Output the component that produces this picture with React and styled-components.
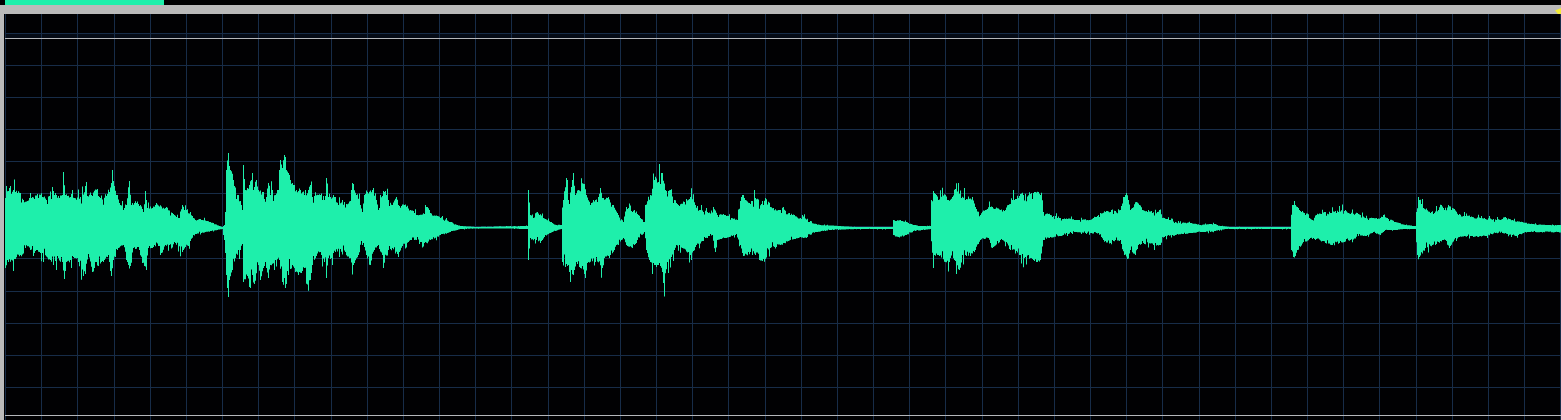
import React, { useMemo } from 'react'
import styled, { createGlobalStyle } from 'styled-components'

const GlobalStyle = createGlobalStyle`
	html, body {
		margin: 0;
		padding: 0;
		background: #000;
	}
`

const Window = styled.div`
	width: 1561px;
	height: 420px;
	display: flex;
	flex-direction: column;
	overflow: hidden;
	background: #bababa;
`

const ProgressTrack = styled.div`
	height: 5px;
	padding-left: 5px;
	background: #010102;
`

const ProgressFill = styled.div`
	width: ${({ $width }) => $width}px;
	height: 100%;
	background: #1eefab;
`

const Band = styled.div`
	position: relative;
	height: 9px;
	background: #bababa;
	&::after {
		content: '';
		position: absolute;
		right: 0;
		bottom: 0;
		width: 6px;
		height: 6px;
		background: #f4ec3a;
		clip-path: polygon(100% 0, 100% 100%, 50% 100%, 0 40%);
	}
`

const Body = styled.div`
	flex: 1;
	display: flex;
	min-height: 0;
`

const Rail = styled.div`
	width: 4px;
	background: #bababa;
`

const Scope = styled.div`
	flex: 1;
	background: #010103;
	svg {
		display: block;
	}
`

const GRID = '#172c48'
const GREY = '#b4b6ba'
const GREEN = '#1eefab'

const VERTICAL = Array.from({ length: 44 }, (_, i) => Math.round(5 + i * 36.17))
const HORIZONTAL = [33, 65, 97, 129, 161, 193, 226, 258, 291, 323, 355, 387]

// outline of the recording, [x, y] pairs
const TOP = [
	[5, 198], [6, 186], [9, 188], [13, 190], [15, 192], [20, 193], [23, 200], [27, 201], [29, 198], [30, 193], [31, 198], [34, 199], [37, 194], [38, 198], [42, 197], [46, 200], [49, 196], [52, 187], [54, 195], [58, 196], [62, 195], [63, 172], [65, 195], [70, 197], [72, 190], [74, 198], [80, 197], [85, 186], [87, 196], [92, 196], [97, 189], [99, 197], [106, 196], [109, 192], [113, 181], [116, 195], [119, 203], [123, 210], [126, 205], [129, 181], [131, 205], [136, 203], [140, 205], [143, 212], [145, 191], [147, 208], [155, 205], [165, 208], [172, 213], [178, 218], [182, 205], [186, 210], [190, 212], [195, 220], [200, 219], [210, 222], [222, 227],
	[224, 225], [225, 212], [226, 170], [228, 153], [230, 170], [233, 180], [238, 195], [242, 210], [243, 165], [245, 190], [249, 185], [252, 173], [253, 190], [256, 180], [258, 190], [262, 192], [266, 197], [268, 183], [270, 195], [272, 190], [275, 195], [278, 190], [279, 170], [280, 160], [282, 168], [284, 155], [286, 170], [290, 180], [294, 185], [296, 190], [300, 190], [304, 195], [310, 185], [312, 197], [318, 195], [325, 196], [326, 178], [328, 197], [335, 197], [338, 205], [342, 200], [346, 204], [350, 201], [352, 183], [356, 195], [360, 205], [362, 212], [364, 195], [367, 192], [373, 188], [376, 200], [378, 210], [380, 195], [383, 191], [388, 200], [392, 205], [396, 197], [398, 205], [404, 205], [410, 210], [416, 215], [424, 214], [426, 207], [430, 213], [440, 218], [450, 222], [460, 226], [475, 227],
	[527, 226], [528, 190], [530, 215], [533, 218], [537, 212], [543, 218], [550, 222], [556, 225], [561, 225], [563, 200], [566, 178], [568, 200], [571, 187], [573, 173], [575, 195], [578, 190], [584, 184], [586, 195], [590, 205], [598, 197], [600, 188], [602, 198], [608, 197], [612, 205], [618, 215], [623, 222], [626, 207], [632, 212], [634, 210], [640, 218], [644, 222], [645, 205], [650, 195], [654, 180], [658, 182], [662, 173], [665, 190], [670, 190], [674, 200], [678, 205], [684, 202], [690, 197], [695, 205], [700, 210], [708, 213], [713, 207], [717, 215], [725, 215], [737, 220], [741, 197], [745, 200], [750, 204], [755, 198], [763, 205], [765, 198], [770, 207], [780, 210], [783, 207], [790, 215], [800, 218], [802, 215], [808, 222], [820, 225], [840, 226], [855, 227],
	[892, 227], [893, 220], [896, 221], [900, 220], [908, 223], [918, 226], [930, 226], [931, 200], [933, 191], [936, 195], [938, 200], [945, 195], [947, 200], [952, 197], [958, 183], [961, 198], [965, 200], [972, 197], [975, 207], [980, 215], [985, 210], [992, 207], [1000, 210], [1005, 210], [1008, 205], [1012, 200], [1018, 198], [1023, 195], [1030, 194], [1038, 192], [1040, 195], [1043, 212], [1050, 215], [1060, 218], [1075, 220], [1090, 220], [1098, 215], [1100, 213], [1110, 212], [1120, 210], [1123, 197], [1125, 195], [1128, 200], [1130, 210], [1136, 202], [1139, 205], [1142, 210], [1148, 210], [1157, 212], [1159, 210], [1162, 218], [1175, 222], [1190, 223], [1200, 225], [1210, 224], [1215, 224], [1220, 226], [1230, 227], [1290, 227],
	[1292, 205], [1294, 201], [1298, 208], [1305, 215], [1312, 220], [1316, 215], [1325, 212], [1330, 213], [1338, 212], [1345, 210], [1350, 214], [1358, 214], [1365, 218], [1372, 218], [1380, 218], [1383, 215], [1388, 219], [1395, 222], [1405, 225], [1415, 226],
	[1418, 197], [1419, 200], [1423, 208], [1430, 213], [1438, 210], [1441, 205], [1444, 210], [1448, 205], [1452, 208], [1458, 215], [1470, 217], [1485, 219], [1500, 220], [1505, 217], [1512, 220], [1520, 222], [1530, 224], [1545, 225], [1561, 225],
]

const BOTTOM = [
	[5, 268], [7, 260], [15, 259], [20, 255], [25, 248], [30, 250], [32, 246], [33, 256], [36, 250], [42, 253], [50, 260], [53, 265], [58, 258], [62, 262], [64, 279], [66, 262], [72, 256], [78, 262], [83, 276], [85, 274], [88, 254], [92, 272], [95, 262], [98, 266], [108, 255], [111, 276], [113, 260], [117, 250], [123, 245], [128, 265], [130, 266], [133, 248], [138, 247], [144, 266], [146, 270], [148, 248], [158, 246], [160, 255], [165, 245], [175, 243], [182, 252], [185, 247], [188, 246], [193, 235], [205, 232], [222, 229],
	[224, 240], [226, 275], [228, 297], [229, 280], [232, 270], [235, 258], [240, 250], [242, 244], [243, 282], [247, 276], [250, 288], [252, 275], [254, 284], [258, 265], [260, 280], [265, 262], [268, 278], [270, 265], [275, 260], [279, 260], [282, 282], [285, 288], [288, 275], [292, 265], [298, 275], [304, 268], [310, 280], [312, 265], [316, 256], [320, 252], [324, 262], [326, 278], [328, 258], [335, 252], [340, 249], [345, 252], [350, 258], [353, 265], [358, 255], [361, 241], [363, 243], [366, 255], [370, 265], [374, 250], [378, 245], [382, 255], [383, 268], [388, 250], [392, 248], [398, 257], [402, 246], [410, 240], [416, 240], [424, 243], [430, 240], [440, 235], [450, 232], [460, 229], [490, 228],
	[527, 229], [528, 260], [530, 238], [536, 240], [540, 243], [545, 235], [552, 232], [561, 229], [562, 262], [565, 267], [568, 265], [573, 275], [576, 262], [582, 266], [585, 278], [588, 262], [595, 262], [602, 268], [604, 258], [610, 255], [618, 245], [623, 238], [626, 245], [632, 248], [637, 240], [644, 232], [646, 250], [650, 262], [658, 265], [662, 272], [663, 283], [667, 262], [671, 257], [676, 245], [682, 248], [690, 255], [696, 245], [705, 238], [712, 235], [715, 252], [717, 240], [726, 238], [736, 234], [740, 245], [743, 256], [748, 252], [755, 255], [765, 259], [770, 248], [780, 245], [790, 240], [800, 237], [806, 238], [815, 232], [830, 230], [855, 229],
	[892, 229], [893, 235], [898, 237], [905, 235], [915, 231], [930, 229], [933, 268], [934, 255], [938, 255], [945, 262], [950, 258], [959, 270], [962, 255], [970, 256], [975, 250], [980, 240], [988, 238], [992, 248], [1000, 240], [1006, 242], [1010, 250], [1020, 255], [1030, 258], [1040, 260], [1043, 240], [1050, 237], [1060, 236], [1075, 232], [1090, 233], [1098, 233], [1103, 240], [1110, 243], [1120, 240], [1124, 255], [1127, 259], [1130, 250], [1135, 255], [1138, 245], [1143, 243], [1157, 245], [1160, 245], [1162, 237], [1175, 235], [1190, 233], [1200, 232], [1210, 232], [1215, 231], [1225, 229], [1290, 229],
	[1291, 250], [1293, 257], [1297, 250], [1303, 242], [1310, 238], [1316, 239], [1325, 243], [1332, 245], [1340, 241], [1350, 240], [1358, 236], [1366, 236], [1373, 232], [1380, 235], [1385, 230], [1395, 230], [1405, 229], [1415, 229],
	[1417, 255], [1419, 257], [1425, 248], [1435, 245], [1445, 240], [1449, 248], [1455, 238], [1470, 236], [1485, 236], [1495, 233], [1505, 233], [1515, 236], [1525, 232], [1540, 232], [1561, 232],
]

const CENTER = 227.5

function interpolate(points, x) {
	let i = 1
	while (i < points.length - 1 && points[i][0] < x) i++
	const [x0, y0] = points[i - 1]
	const [x1, y1] = points[i]
	return y0 + ((y1 - y0) * (x - x0)) / (x1 - x0)
}

function noise(x) {
	const n = Math.sin(x * 12.9898) * 43758.5453
	return n - Math.floor(n)
}

// share of the amplitude to add or remove at x: teeth a few pixels wide plus the odd thin spike
function roughness(x, seed) {
	const tooth = noise(Math.floor(x / 3) + seed) - 0.5
	const fine = noise(x + seed) - 0.5
	const r = noise(x * 2 + seed + 91)
	const spike = r > 0.93 ? 0.3 : r < 0.1 ? -0.18 : 0
	return tooth * 0.16 + fine * 0.12 + spike
}

function buildWave() {
	const topAt = new Set(TOP.map((p) => p[0]))
	const bottomAt = new Set(BOTTOM.map((p) => p[0]))
	const upper = []
	const lower = []
	for (let x = 5; x <= 1561; x++) {
		const top = interpolate(TOP, x)
		const bottom = interpolate(BOTTOM, x)
		const t = topAt.has(x) ? top : top - roughness(x, 0) * (CENTER - top)
		const b = bottomAt.has(x) ? bottom : bottom + roughness(x, 2000) * (bottom - CENTER)
		upper.push(`${x} ${Math.min(t, 227).toFixed(1)}`, `${x + 1} ${Math.min(t, 227).toFixed(1)}`)
		lower.unshift(`${x + 1} ${Math.max(b, 228.5).toFixed(1)}`, `${x} ${Math.max(b, 228.5).toFixed(1)}`)
	}
	return `M${upper.join('L')}L${lower.join('L')}Z`
}

function Scopeplot() {
	const wave = useMemo(buildWave, [])
	return (
		<svg width='1557' height='406' viewBox='4 14 1557 406'>
			<rect x='5' y='33' width='1556' height='5' fill='#050b16' />
			{VERTICAL.map((x) => (
				<line key={x} x1={x + 0.5} x2={x + 0.5} y1='14' y2='420' stroke={GRID} shapeRendering='crispEdges' />
			))}
			{HORIZONTAL.map((y) => (
				<line key={y} x1='5' x2='1561' y1={y + 0.5} y2={y + 0.5} stroke={GRID} shapeRendering='crispEdges' />
			))}
			<line x1='5' x2='1561' y1='38.5' y2='38.5' stroke={GREY} shapeRendering='crispEdges' />
			<line x1='5' x2='1561' y1='415.5' y2='415.5' stroke={GREY} shapeRendering='crispEdges' />
			<path d={wave} fill={GREEN} />
		</svg>
	)
}

export default function App() {
	return (
		<Window>
			<GlobalStyle />
			<ProgressTrack>
				<ProgressFill $width={159} />
			</ProgressTrack>
			<Band />
			<Body>
				<Rail />
				<Scope>
					<Scopeplot />
				</Scope>
			</Body>
		</Window>
	)
}
